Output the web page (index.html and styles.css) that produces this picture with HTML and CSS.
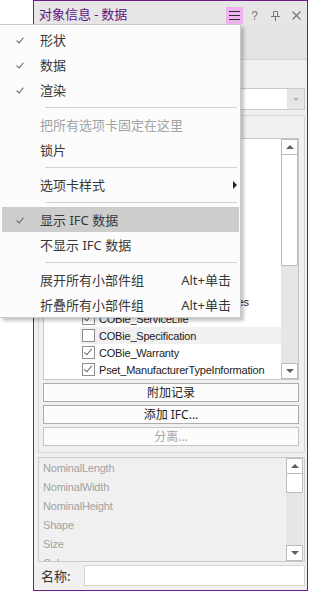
FILE: index.html
```html
<!DOCTYPE html>
<html lang="zh-CN">
<head>
  <meta charset="UTF-8" />
  <title>对象信息 - 数据</title>
  <link rel="stylesheet" href="styles.css">
</head>
<body>

  <div class="panel">
    <div class="titlebar">
      <span class="title">对象信息 - 数据</span>
      <span class="tb-menu">
        <svg width="11" height="9" viewBox="0 0 11 9"><path d="M0 0.5h11M0 4.5h11M0 8.5h11" stroke="#2b2b2b" stroke-width="1"/></svg>
      </span>
      <span class="tb-btn tb-help">?</span>
      <span class="tb-btn">
        <svg width="9" height="10" viewBox="0 0 9 10"><path d="M2.5 0.5h4v5h-4z M0 5.5h9 M4.5 5.5v4.5" stroke="#777" stroke-width="1" fill="none"/></svg>
      </span>
      <span class="tb-btn">
        <svg width="9" height="9" viewBox="0 0 9 9"><path d="M0.5 0.5l8 8M8.5 0.5l-8 8" stroke="#777" stroke-width="1.2"/></svg>
      </span>
    </div>
    <div class="tabstrip"></div>

    <div class="body">
      <div class="combo">
        <span class="combo-text"></span>
        <span class="combo-arrow"><i class="tri-down light"></i></span>
      </div>

      <div class="group">
        <div class="listbox">
          <div class="rows">
            <div class="row"><span class="cb on"></span>COBie_Asset</div>
            <div class="row"><span class="cb on"></span>COBie_Attribute</div>
            <div class="row"><span class="cb on"></span>COBie_Component</div>
            <div class="row"><span class="cb"></span>COBie_Connection</div>
            <div class="row"><span class="cb on"></span>COBie_Document</div>
            <div class="row"><span class="cb"></span>COBie_Impact</div>
            <div class="row"><span class="cb on"></span>COBie_Issue</div>
            <div class="row"><span class="cb"></span>COBie_Job</div>
            <div class="row"><span class="cb on"></span>Pset_ManufacturerOccurrences</div>
            <div class="row"><span class="cb on"></span>COBie_ServiceLife</div>
            <div class="row hover"><span class="cb"></span>COBie_Specification</div>
            <div class="row"><span class="cb on"></span>COBie_Warranty</div>
            <div class="row"><span class="cb on"></span>Pset_ManufacturerTypeInformation</div>
          </div>
          <div class="vscroll">
            <span class="sb-btn"><i class="tri-up"></i></span>
            <span class="sb-thumb tall"></span>
            <span class="sb-track"></span>
            <span class="sb-btn"><i class="tri-down"></i></span>
          </div>
        </div>
        <button class="btn">附加记录</button>
        <button class="btn">添加 IFC...</button>
        <button class="btn" disabled>分离...</button>
      </div>

      <div class="proplist">
        <div class="props">
          <div class="prop">NominalLength</div>
          <div class="prop">NominalWidth</div>
          <div class="prop">NominalHeight</div>
          <div class="prop">Shape</div>
          <div class="prop">Size</div>
          <div class="prop">Color</div>
        </div>
        <div class="vscroll">
          <span class="sb-btn"><i class="tri-up"></i></span>
          <span class="sb-thumb"></span>
          <span class="sb-track"></span>
          <span class="sb-btn"><i class="tri-down"></i></span>
        </div>
      </div>

      <div class="namerow">
        <label for="nameInput">名称:</label>
        <input type="text" id="nameInput" />
      </div>
    </div>
  </div>

  <!-- Context menu over the panel -->
  <div class="menu">
    <div class="item"><span class="check"></span>形状</div>
    <div class="item"><span class="check"></span>数据</div>
    <div class="item"><span class="check"></span>渲染</div>
    <div class="sep"></div>
    <div class="item disabled">把所有选项卡固定在这里</div>
    <div class="item">锁片</div>
    <div class="sep"></div>
    <div class="item">选项卡样式<i class="sub-arrow"></i></div>
    <div class="sep"></div>
    <div class="item active"><span class="check"></span>显示 IFC 数据</div>
    <div class="item">不显示 IFC 数据</div>
    <div class="sep"></div>
    <div class="item">展开所有小部件组<span class="shortcut">Alt+单击</span></div>
    <div class="item">折叠所有小部件组<span class="shortcut">Alt+单击</span></div>
  </div>

</body>
</html>
```

FILE: styles.css
```css
body {
  margin: 0;
  background: #fff;
  font-family: "Noto Sans", "Noto Sans CJK SC", sans-serif;
  font-size: 13px;
  color: #333;
  position: relative;
}

/* Panel */
.panel {
  margin-left: 33px;
  width: 275px;
  height: 591px;
  box-sizing: border-box;
  border: 1px solid #6e1d8a;
  display: flex;
  flex-direction: column;
}
.titlebar {
  height: 23px;
  background: #e6e6e6;
  display: flex;
  align-items: center;
  padding-left: 5px;
}
.title {
  color: #62157f;
  font-family: "Noto Sans CJK SC", sans-serif;
  font-size: 13px;
  flex: 1;
  margin-top: 1px;
}
.tb-menu {
  width: 17px;
  height: 17px;
  margin-top: 6px;
  background: #f0b2f0;
  display: flex;
  align-items: center;
  justify-content: center;
}
.tb-btn {
  width: 21px;
  display: flex;
  justify-content: center;
  margin-top: 6px;
  color: #777;
}
.tb-help {
  font-family: "Liberation Sans", sans-serif;
  font-size: 12px;
  margin-left: 1px;
}
.tabstrip {
  height: 35px;
  background: #e3e3e3;
  border-bottom: 1px solid #d2d2d2;
}

.body {
  flex: 1;
  background: #f0f0f0;
  padding: 0 2px 0 4px;
  display: flex;
  flex-direction: column;
}

.combo {
  margin-top: 28px;
  height: 22px;
  box-sizing: border-box;
  border: 1px solid #cacaca;
  background: #fff;
  display: flex;
}
.combo-text { flex: 1; }
.combo-arrow {
  width: 17px;
  background: #e6e6e6;
  display: flex;
  align-items: center;
  justify-content: center;
}

.group {
  margin-top: 5px;
  height: 338px;
  box-sizing: border-box;
  border: 1px solid #d6d6d6;
  padding: 22px 5px 6px 4px;
  display: flex;
  flex-direction: column;
  gap: 3px;
}
.listbox {
  height: 242px;
  flex: none;
  box-sizing: border-box;
  border: 1px solid #c8c8c8;
  background: #fff;
  display: flex;
}
.rows {
  flex: 1;
  overflow: hidden;
  display: flex;
  flex-direction: column;
  justify-content: flex-end;
  padding-bottom: 1px;
}
.row {
  flex: none;
  height: 17px;
  margin-left: 36px;
  padding-left: 2px;
  display: flex;
  align-items: center;
  font-family: "Liberation Sans", sans-serif;
  font-size: 11px;
  letter-spacing: -0.2px;
  color: #222;
  white-space: nowrap;
}
.row.hover { background: #f0f0f0; }
.cb {
  width: 11px;
  height: 11px;
  border: 1px solid #8e8e8e;
  background: #fff;
  margin-right: 4px;
  flex: none;
  position: relative;
}
.cb.on::after {
  content: "";
  position: absolute;
  left: 3px;
  top: 0px;
  width: 3px;
  height: 7px;
  border: solid #666;
  border-width: 0 1px 1px 0;
  transform: rotate(40deg);
}

/* Scrollbars */
.vscroll {
  width: 17px;
  display: flex;
  flex-direction: column;
  background: #e6e6e6;
}
.sb-btn {
  height: 16px;
  flex: none;
  box-sizing: border-box;
  border: 1px solid #bcbcbc;
  background: #fff;
  display: flex;
  align-items: center;
  justify-content: center;
}
.sb-thumb {
  height: 19px;
  flex: none;
  box-sizing: border-box;
  border: 1px solid #bcbcbc;
  border-top: none;
  background: #fff;
}
.sb-thumb.tall { height: 111px; }
.sb-track { flex: 1; }

.tri-up, .tri-down {
  width: 0;
  height: 0;
  border-left: 4px solid transparent;
  border-right: 4px solid transparent;
}
.tri-up { border-bottom: 4px solid #606060; }
.tri-down { border-top: 4px solid #606060; }
.tri-down.light { border-top-color: #b4b4b4; border-left-width: 3px; border-right-width: 3px; border-top-width: 3px; }

.btn {
  height: 19px;
  flex: none;
  box-sizing: border-box;
  border: 1px solid #adadad;
  background: #fcfcfc;
  font-family: "Noto Sans", "Noto Sans CJK SC", sans-serif;
  font-size: 12px;
  color: #222;
  padding: 0;
  line-height: 17px;
}
.btn:disabled {
  border-color: #c4c4c4;
  color: #a6a6a6;
}

.proplist {
  margin-top: 4px;
  height: 105px;
  box-sizing: border-box;
  border: 1px solid #cacaca;
  background: #f0f0f0;
  display: flex;
}
.props {
  flex: 1;
  overflow: hidden;
  padding-left: 4px;
}
.prop {
  height: 19px;
  display: flex;
  align-items: center;
  font-family: "Liberation Sans", sans-serif;
  font-size: 11px;
  letter-spacing: -0.2px;
  color: #a3a3a3;
}
.proplist .vscroll {
  margin: 0 1px 0 0;
}

.namerow {
  margin-top: 3px;
  height: 21px;
  display: flex;
  align-items: center;
}
.namerow label {
  width: 43px;
  padding-left: 3px;
  font-family: "Noto Sans CJK SC", sans-serif;
  font-size: 13px;
  color: #333;
}
.namerow input {
  flex: 1;
  height: 21px;
  box-sizing: border-box;
  border: 1px solid #d4d4d4;
  background: #fff;
  margin: 0;
}

/* Menu */
.menu {
  position: absolute;
  left: 0;
  top: 24px;
  width: 241px;
  height: 294px;
  box-sizing: border-box;
  padding-top: 2px;
  background: #fcfcfc;
  border: 1px solid #c9c9c9;
  border-left: none;
  box-shadow: 3px 3px 3px rgba(0, 0, 0, 0.22);
}
.item {
  height: 25px;
  margin: 0 1px 0 2px;
  padding-left: 38px;
  display: flex;
  align-items: center;
  position: relative;
  color: #383838;
}
.item.active { background: #cdcdcd; }
.item.disabled { color: #a3a3a3; }
.check {
  position: absolute;
  left: 16px;
  top: 9px;
  width: 3px;
  height: 6px;
  border: solid #606060;
  border-width: 0 1.5px 1.5px 0;
  transform: rotate(40deg);
}
.shortcut {
  margin-left: auto;
  margin-right: 8px;
}
.sub-arrow {
  margin-left: auto;
  margin-right: 2px;
  width: 0;
  height: 0;
  border-top: 4px solid transparent;
  border-bottom: 4px solid transparent;
  border-left: 4px solid #222;
}
.sep {
  height: 10px;
  margin-left: 45px;
  margin-right: 3px;
  display: flex;
  align-items: center;
}
.sep::before {
  content: "";
  flex: 1;
  border-top: 1px solid #d2d2d2;
}
```
